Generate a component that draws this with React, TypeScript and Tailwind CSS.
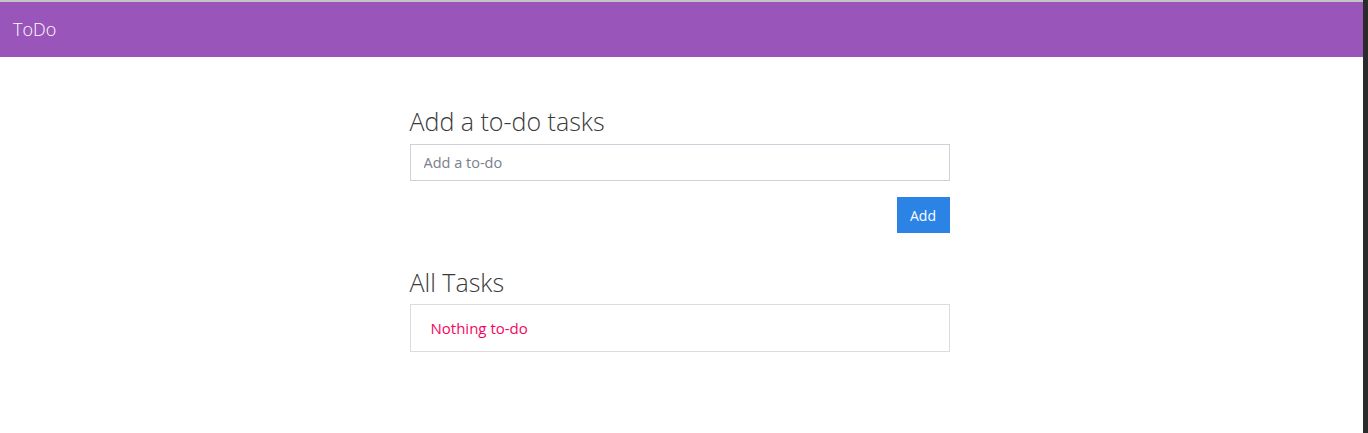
import { useState } from "react";

const App = () => {
    const [todo, setTodo] = useState("");

    return (
        <div className="flex min-h-[433px] w-full bg-white" style={{ fontFamily: '"Open Sans", "Noto Sans", sans-serif' }}>
            <div className="flex flex-1 flex-col">
                <div className="h-[2px] bg-[#c4c4c4]" />
                <nav className="flex h-[55px] items-center bg-[#9a55ba] px-[13px]">
                    <span className="text-[18px] font-light text-white">ToDo</span>
                </nav>
                <main className="mx-auto flex w-[540px] -translate-x-[2px] flex-col pt-[48px]">
                    <h2 className="text-[25px] font-light leading-[32px] text-[#3a3a3a]">Add a to-do tasks</h2>
                    <input
                        value={todo}
                        onChange={(e) => setTodo(e.target.value)}
                        placeholder="Add a to-do"
                        className="mt-[7px] h-[37px] w-full border border-[#cdd2da] px-[13px] text-[14.5px] text-[#333] placeholder:text-[#7b8089] outline-none"
                    />
                    <div className="mt-[16px] flex justify-end">
                        <button className="h-[36px] w-[53px] bg-[#2a83e5] text-[14px] text-white">Add</button>
                    </div>
                    <h2 className="mt-[33px] text-[25px] font-light leading-[32px] text-[#3a3a3a]">All Tasks</h2>
                    <div className="mt-[6px] flex h-[48px] items-center border border-[#dcdcdc] px-[20px]">
                        <span className="text-[15px] text-[#f5055f]">Nothing to-do</span>
                    </div>
                </main>
            </div>
            <div className="w-[5px] bg-[#2b2b2b]" />
        </div>
    );
};

export default App;
